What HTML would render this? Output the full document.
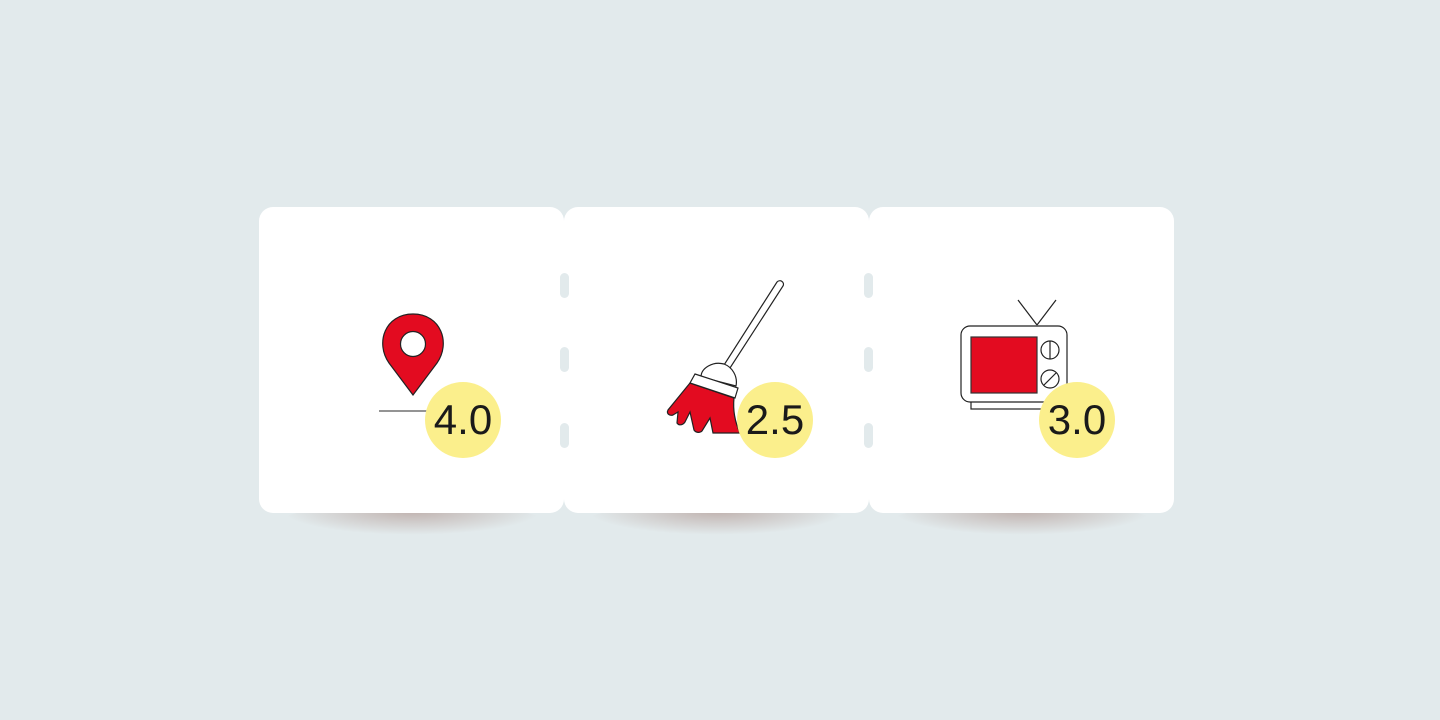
<!DOCTYPE html>
<html><head><meta charset="utf-8"><style>
html,body{margin:0;padding:0;}
body{width:1440px;height:720px;background:#e2eaec;position:relative;overflow:hidden;font-family:"Liberation Sans",sans-serif;}
.card{position:absolute;top:207px;width:305px;height:306px;background:#fff;border-radius:14px;}
.sh{position:absolute;top:505px;width:260px;height:30px;border-radius:50%;background:radial-gradient(ellipse at 50% 20%,rgba(150,110,100,.45),rgba(150,110,100,0) 70%);}
.dash{position:absolute;width:9px;height:25px;border-radius:5px;background:#e2eaec;}
.badge{position:absolute;width:76px;height:76px;border-radius:50%;background:#fbef8c;color:#1a1a1a;font-size:42px;line-height:76px;text-align:center;top:382px;}
svg{position:absolute;left:0;top:0;}
</style></head><body>
<div class="sh" style="left:282px"></div>
<div class="sh" style="left:587px"></div>
<div class="sh" style="left:892px"></div>
<div class="card" style="left:259px"></div>
<div class="card" style="left:564px"></div>
<div class="card" style="left:869px"></div>
<div class="dash" style="left:560px;top:273px"></div>
<div class="dash" style="left:560px;top:347px"></div>
<div class="dash" style="left:560px;top:423px"></div>
<div class="dash" style="left:864px;top:273px"></div>
<div class="dash" style="left:864px;top:347px"></div>
<div class="dash" style="left:864px;top:423px"></div>
<svg width="1440" height="720" viewBox="0 0 1440 720">
 <g stroke="#222" stroke-width="1.2">
  <line x1="379" y1="411" x2="430" y2="411" stroke="#555"/>
  <path d="M413 395 L389 363 C375 343 385 314 413 314 C441 314 451 343 437 363 Z" fill="#e30b20"/>
  <circle cx="413" cy="344" r="12.5" fill="#fff"/>
  <!-- broom -->
  <path d="M777 282 C780 279 785 282 783 286 L730 368 L724 365 Z" fill="#fff"/>
  <path d="M690 383 L668 410 C666 414 670 416 673 415 L678 412 L677 423 C679 426 683 425 685 422 L690 412 L694 430 C696 433 700 433 702 431 L710 418 L713 433 L740 433 C734 420 733 408 734 398 Z" fill="#e30b20"/>
  <path d="M701 377 C701 368 713 361 724 364 C732 367 738 376 736 386 Z" fill="#fff"/>
  <path d="M695 374 L738 388 L735 398 L690 383 Z" fill="#fff"/>
  <!-- tv -->
  <line x1="1018" y1="300" x2="1037" y2="325"/>
  <line x1="1056" y1="300" x2="1037" y2="325"/>
  <rect x="971" y="398" width="86" height="11" fill="#fff"/>
  <rect x="961" y="326" width="106" height="76" rx="9" fill="#fff"/>
  <rect x="971" y="337" width="66" height="56" fill="#e30b20" stroke="#333"/>
  <circle cx="1050" cy="350" r="9" fill="#fff"/>
  <line x1="1050" y1="341" x2="1050" y2="359"/>
  <circle cx="1050" cy="379" r="9" fill="#fff"/>
  <line x1="1044" y1="385" x2="1056" y2="373"/>
 </g>
</svg>
<div class="badge" style="left:425px">4.0</div>
<div class="badge" style="left:737px">2.5</div>
<div class="badge" style="left:1039px">3.0</div>
</body></html>
